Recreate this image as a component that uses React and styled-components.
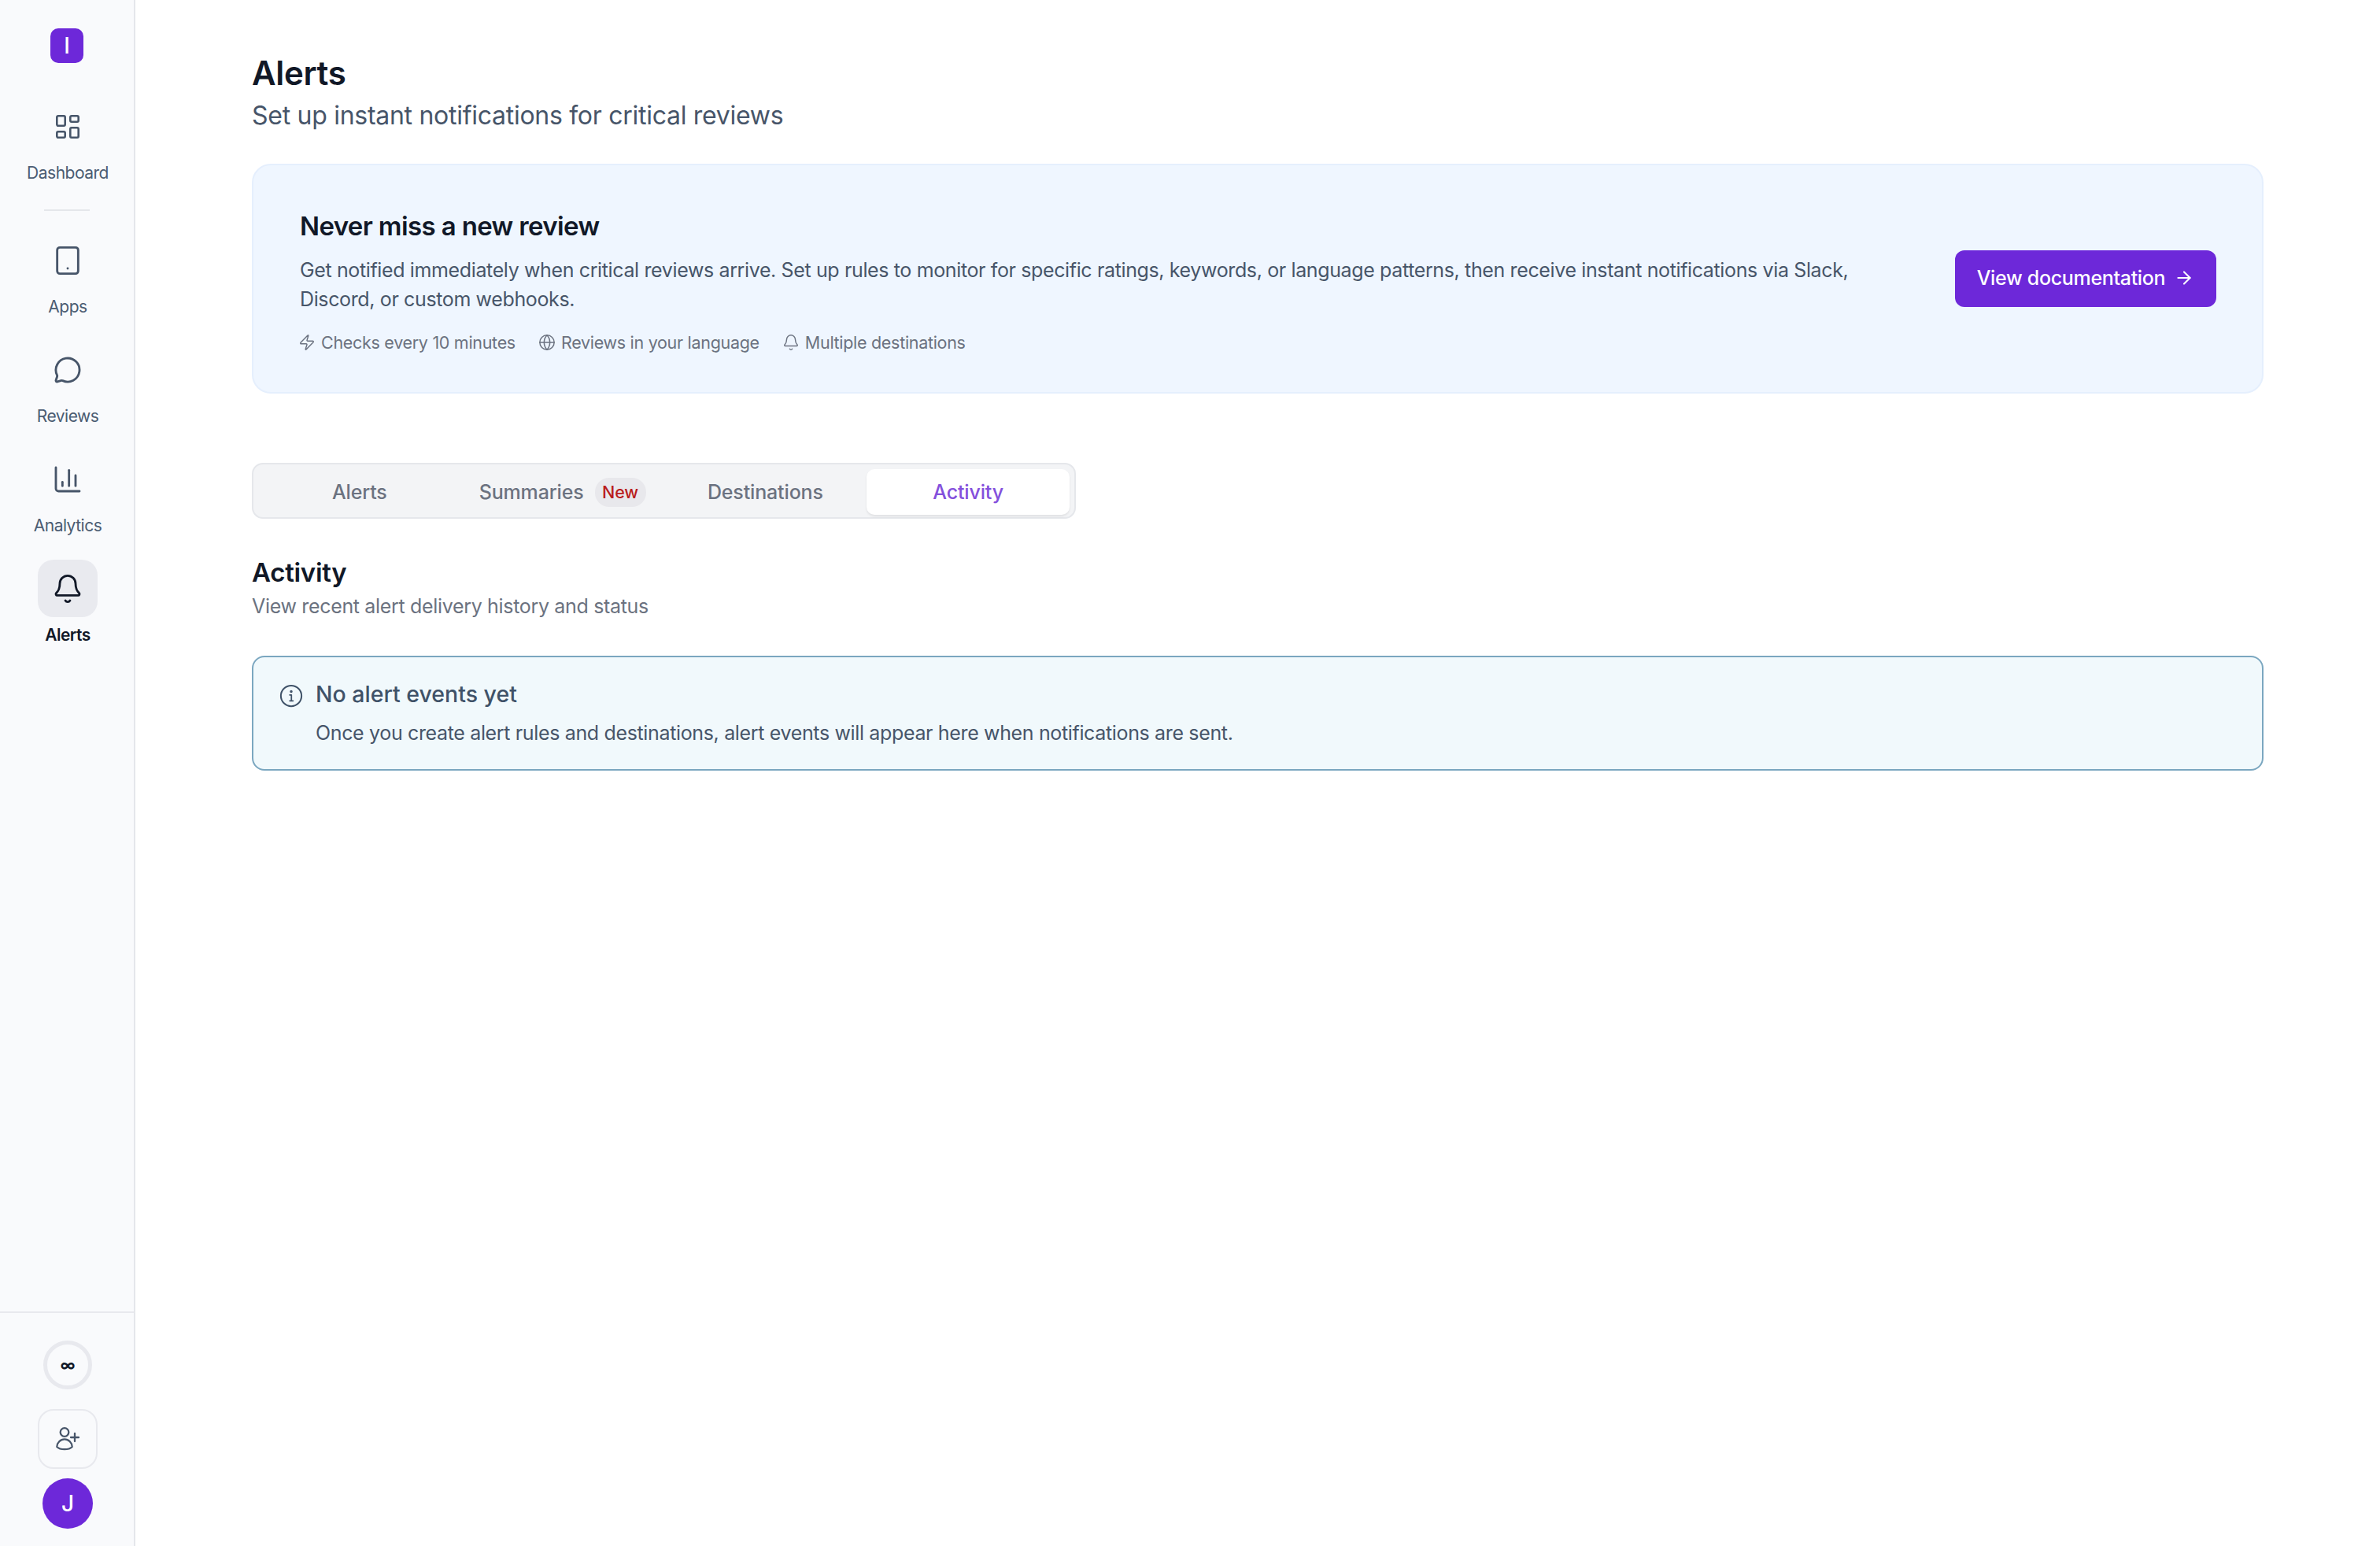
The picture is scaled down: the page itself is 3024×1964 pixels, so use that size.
import styled, { createGlobalStyle } from "styled-components";
import { Tablet, MessageCircle, ChartColumn, Bell, Zap, Globe, ArrowRight } from "lucide-react";

const GlobalStyle = createGlobalStyle`
  html, body {
    margin: 0;
    padding: 0;
    background: #ffffff;
  }
  body {
    font-family: Inter, "Noto Sans", "Liberation Sans", sans-serif;
    color: #475569;
  }
  * {
    box-sizing: border-box;
  }
`;

const Shell = styled.div`
  display: flex;
  width: 100%;
  min-height: 100vh;
`;

const Sidebar = styled.aside`
  width: 172px;
  flex-shrink: 0;
  display: flex;
  flex-direction: column;
  align-items: center;
  background: #f9fafc;
  border-right: 2px solid #e5e7eb;
  padding-top: 36px;
`;

const Logo = styled.div`
  width: 42px;
  height: 44px;
  border-radius: 10px;
  background: #6d28d9;
  color: #ffffff;
  display: flex;
  align-items: center;
  justify-content: center;
  font-size: 28px;
  font-weight: 500;
  margin-bottom: 44px;
`;

const Nav = styled.nav`
  display: flex;
  flex-direction: column;
  align-items: center;
  gap: 27px;
  margin-left: 2px;
`;

const NavItem = styled.a`
  display: flex;
  flex-direction: column;
  align-items: center;
  width: 150px;
  height: 112px;
`;

const NavIcon = styled.div`
  width: 76px;
  height: 76px;
  border-radius: 20px;
  display: flex;
  align-items: center;
  justify-content: center;
  color: ${(p) => (p.$active ? "#111827" : "#475569")};
  background: ${(p) => (p.$active ? "#e9eaef" : "transparent")};
`;

const NavLabel = styled.span`
  margin-top: 7px;
  font-size: 21px;
  line-height: 32px;
  letter-spacing: -0.5px;
  font-weight: ${(p) => (p.$active ? 600 : 400)};
  color: ${(p) => (p.$active ? "#111827" : "#4b5c72")};
`;

const NavDivider = styled.div`
  width: 58px;
  height: 2px;
  background: #e5e7eb;
  margin: 3px 0 -1px -2px;
`;

const SidebarFooter = styled.div`
  margin-top: auto;
  width: 100%;
  height: 298px;
  border-top: 2px solid #e8e9ee;
  padding-left: 2px;
  display: flex;
  flex-direction: column;
  align-items: center;
`;

const UsageRing = styled.div`
  margin-top: 35px;
  width: 62px;
  height: 62px;
  border-radius: 50%;
  border: 5px solid #e8e9ee;
  display: flex;
  align-items: center;
  justify-content: center;
  color: #111827;
  font-size: 19px;
  font-weight: 700;
  line-height: 1;
`;

const InviteButton = styled.button`
  margin-top: 25px;
  width: 76px;
  height: 76px;
  border-radius: 20px;
  border: 2px solid #e8e9ee;
  background: transparent;
  color: #475569;
  display: flex;
  align-items: center;
  justify-content: center;
  padding: 0;
`;

const Avatar = styled.div`
  margin-top: 12px;
  width: 64px;
  height: 64px;
  border-radius: 50%;
  background: #6d28d9;
  color: #ffffff;
  display: flex;
  align-items: center;
  justify-content: center;
  font-size: 28px;
  font-weight: 500;
`;

const Main = styled.main`
  flex: 1;
  min-width: 0;
  padding: 67px 148px 0;
`;

const PageTitle = styled.h1`
  margin: 0;
  font-size: 42px;
  line-height: 52px;
  font-weight: 600;
  letter-spacing: -0.3px;
  color: #111827;
`;

const PageSubtitle = styled.p`
  margin: 8px 0 0;
  font-size: 32px;
  line-height: 40px;
  font-weight: 400;
  letter-spacing: -0.28px;
  color: #475569;
`;

const Banner = styled.section`
  margin-top: 41px;
  height: 292px;
  display: flex;
  align-items: flex-start;
  justify-content: space-between;
  gap: 100px;
  background: #eff6ff;
  border: 2px solid #e5effd;
  border-radius: 24px;
  padding: 57px 58px 49px 59px;
`;

const BannerBody = styled.div`
  flex: 1;
  min-width: 0;
`;

const BannerTitle = styled.h2`
  margin: 0;
  font-size: 33px;
  line-height: 40px;
  font-weight: 600;
  letter-spacing: -0.63px;
  color: #111827;
`;

const BannerText = styled.p`
  margin: 18px 0 0;
  font-size: 25px;
  line-height: 37px;
  letter-spacing: -0.37px;
  color: #475569;
`;

const MetaRow = styled.div`
  margin-top: 22px;
  display: flex;
  align-items: center;
  gap: 31px;
`;

const MetaItem = styled.span`
  display: inline-flex;
  align-items: center;
  gap: 7px;
  font-size: 21.5px;
  line-height: 28px;
  letter-spacing: -0.3px;
  color: #6b7280;

  svg {
    margin-left: -2px;
  }
`;

const DocsButton = styled.a`
  flex-shrink: 0;
  align-self: center;
  margin-top: -8px;
  padding-bottom: 2px;
  width: 332px;
  height: 72px;
  border-radius: 12px;
  background: #6d28d9;
  color: #ffffff;
  display: flex;
  align-items: center;
  justify-content: center;
  gap: 11px;
  font-size: 25px;
  font-weight: 500;
  letter-spacing: -0.32px;
`;

const Tabs = styled.div`
  margin-top: 88px;
  width: 1047px;
  height: 71px;
  display: grid;
  grid-template-columns: repeat(4, 1fr);
  padding: 6px 6px 3px;
  background: #f3f4f6;
  border: 2px solid #e5e7eb;
  border-radius: 14px;
`;

const Tab = styled.div`
  display: flex;
  align-items: center;
  justify-content: center;
  gap: 14px;
  border-radius: 10px;
  font-size: 25px;
  font-weight: 500;
  letter-spacing: -0.15px;
  color: ${(p) => (p.$active ? "#8450dc" : "#6b7280")};
  background: ${(p) => (p.$active ? "#ffffff" : "transparent")};
  box-shadow: ${(p) => (p.$active ? "0 2px 3px rgba(0, 0, 0, 0.08)" : "none")};
`;

const NewBadge = styled.span`
  width: 65px;
  height: 37px;
  border-radius: 18px;
  background: #e8e8ec;
  color: #b91c1c;
  display: flex;
  align-items: center;
  justify-content: center;
  font-size: 21.5px;
  font-weight: 500;
  letter-spacing: -0.1px;
`;

const SectionTitle = styled.h3`
  margin: 47px 0 0;
  font-size: 33px;
  line-height: 42px;
  font-weight: 600;
  letter-spacing: -0.3px;
  color: #111827;
`;

const SectionSubtitle = styled.p`
  margin: 4px 0 0;
  font-size: 25px;
  line-height: 36px;
  letter-spacing: -0.33px;
  color: #6b7280;
`;

const InfoBox = styled.div`
  margin-top: 45px;
  height: 146px;
  display: flex;
  gap: 16px;
  background: #f1f9fc;
  border: 2px solid #7ba7c0;
  border-radius: 16px;
  padding: 31px 33px 0;
`;

const InfoIcon = styled.svg`
  width: 30px;
  height: 30px;
  margin-top: 3px;
  flex-shrink: 0;
  color: #3f5268;
`;

const InfoTitle = styled.div`
  font-size: 28.5px;
  line-height: 32px;
  font-weight: 500;
  color: #3f5268;
`;

const InfoText = styled.div`
  margin-top: 15px;
  font-size: 25px;
  line-height: 36px;
  letter-spacing: -0.35px;
  color: #475569;
`;

const DashIcon = () => (
  <svg width="30" height="30" viewBox="0 0 30 30" fill="none" stroke="currentColor" strokeWidth="2.6" strokeLinejoin="round">
    <rect x="1.3" y="1.3" width="10.4" height="12.4" rx="1.6" />
    <rect x="1.3" y="21.3" width="10.4" height="7.4" rx="1.6" />
    <rect x="18.3" y="1.3" width="10.4" height="7.4" rx="1.6" />
    <rect x="18.3" y="16.3" width="10.4" height="12.4" rx="1.6" />
  </svg>
);

const UserPlusIcon = () => (
  <svg width="30" height="30" viewBox="0 0 30 30" fill="none" stroke="currentColor" strokeWidth="2.3" strokeLinecap="round" strokeLinejoin="round">
    <circle cx="11" cy="6.5" r="5.3" />
    <path d="M1.3 25c0-5 4.5-9.7 9.7-9.7s9.7 4.7 9.7 9.7c-2 2-5.5 3.2-9.7 3.2s-7.7-1.2-9.7-3.2Z" />
    <path d="M24 8v10M19 13h10" />
  </svg>
);

const navTop = [{ label: "Dashboard", icon: <DashIcon /> }];

const navRest = [
  { label: "Apps", icon: <Tablet size={40} strokeWidth={1.7} /> },
  { label: "Reviews", icon: <MessageCircle size={36} strokeWidth={1.9} /> },
  { label: "Analytics", icon: <ChartColumn size={40} strokeWidth={1.7} /> },
  { label: "Alerts", icon: <Bell size={40} strokeWidth={1.7} />, active: true },
];

const SideLink = ({ item }) => (
  <NavItem>
    <NavIcon $active={item.active}>{item.icon}</NavIcon>
    <NavLabel $active={item.active}>{item.label}</NavLabel>
  </NavItem>
);

export default function App() {
  return (
    <Shell>
      <GlobalStyle />
      <Sidebar>
        <Logo>I</Logo>
        <Nav>
          {navTop.map((item) => (
            <SideLink key={item.label} item={item} />
          ))}
          <NavDivider />
          {navRest.map((item) => (
            <SideLink key={item.label} item={item} />
          ))}
        </Nav>
        <SidebarFooter>
          <UsageRing>∞</UsageRing>
          <InviteButton>
            <UserPlusIcon />
          </InviteButton>
          <Avatar>J</Avatar>
        </SidebarFooter>
      </Sidebar>
      <Main>
        <PageTitle>Alerts</PageTitle>
        <PageSubtitle>Set up instant notifications for critical reviews</PageSubtitle>
        <Banner>
          <BannerBody>
            <BannerTitle>Never miss a new review</BannerTitle>
            <BannerText>
              Get notified immediately when critical reviews arrive. Set up rules to monitor for
              specific ratings, keywords, or language patterns, then receive instant notifications
              via Slack, Discord, or custom webhooks.
            </BannerText>
            <MetaRow>
              <MetaItem>
                <Zap size={22} strokeWidth={1.6} />
                Checks every 10 minutes
              </MetaItem>
              <MetaItem>
                <Globe size={22} strokeWidth={1.6} />
                Reviews in your language
              </MetaItem>
              <MetaItem>
                <Bell size={22} strokeWidth={1.6} />
                Multiple destinations
              </MetaItem>
            </MetaRow>
          </BannerBody>
          <DocsButton>
            View documentation
            <ArrowRight size={26} strokeWidth={1.9} />
          </DocsButton>
        </Banner>
        <Tabs>
          <Tab>Alerts</Tab>
          <Tab>
            Summaries
            <NewBadge>New</NewBadge>
          </Tab>
          <Tab>Destinations</Tab>
          <Tab $active>Activity</Tab>
        </Tabs>
        <SectionTitle>Activity</SectionTitle>
        <SectionSubtitle>View recent alert delivery history and status</SectionSubtitle>
        <InfoBox>
          <InfoIcon viewBox="0 0 24 24" fill="none" stroke="currentColor" strokeWidth="1.6" strokeLinecap="round" strokeLinejoin="round">
            <circle cx="12" cy="12" r="10.5" />
            <path d="M10.5 11h1.7v6M10.5 17h3.4" strokeWidth="1.4" />
            <circle cx="12" cy="7.5" r="0.6" fill="currentColor" />
          </InfoIcon>
          <div>
            <InfoTitle>No alert events yet</InfoTitle>
            <InfoText>
              Once you create alert rules and destinations, alert events will appear here when
              notifications are sent.
            </InfoText>
          </div>
        </InfoBox>
      </Main>
    </Shell>
  );
}
